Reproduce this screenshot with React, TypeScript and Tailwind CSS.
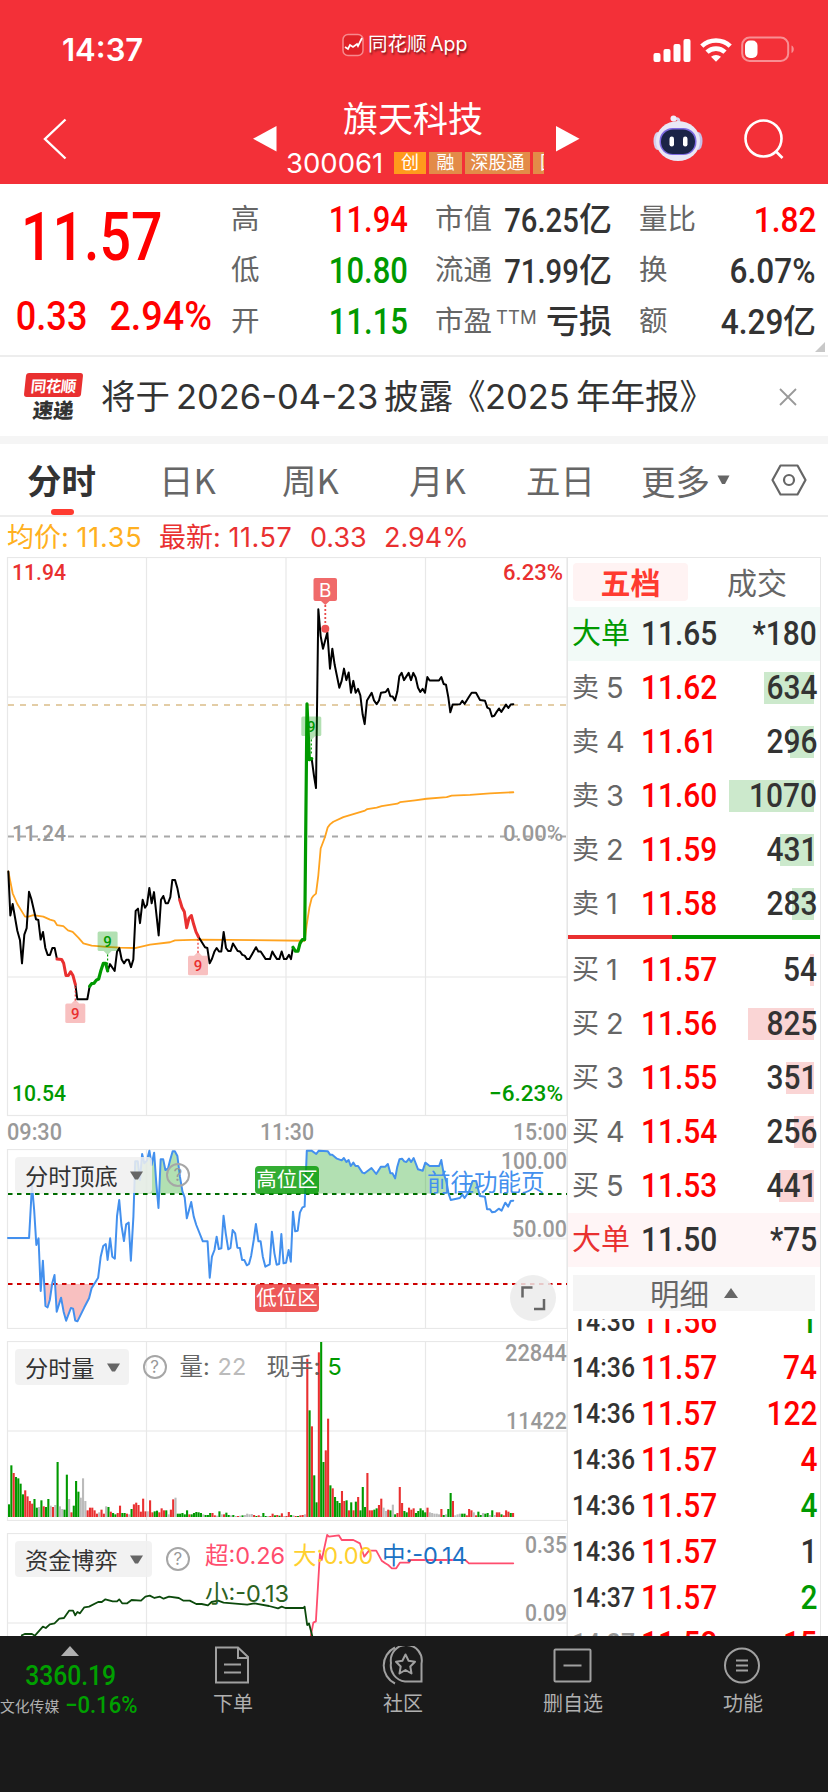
import { clsx } from 'clsx';

const DIN = "font-['Roboto','Noto_Sans_CJK_SC',sans-serif] font-medium";

const quoteColumns = [
  [
    { label: '高', value: '11.94', color: 'text-[#ff0000]' },
    { label: '低', value: '10.80', color: 'text-[#009900]' },
    { label: '开', value: '11.15', color: 'text-[#009900]' },
  ],
  [
    { label: '市值', value: '76.25', unit: '亿', color: 'text-[#333333]' },
    { label: '流通', value: '71.99', unit: '亿', color: 'text-[#333333]' },
    { label: '市盈', sup: 'TTM', value: '', unit: '亏损', color: 'text-[#333333]' },
  ],
  [
    { label: '量比', value: '1.82', color: 'text-[#ff0000]' },
    { label: '换', value: '6.07%', color: 'text-[#333333]' },
    { label: '额', value: '4.29', unit: '亿', color: 'text-[#333333]' },
  ],
];

const valueSizes = ['scale-x-[0.86] text-[36px]', 'scale-x-[0.86] text-[34px]', 'scale-x-[0.89] text-[35.500px]'];

const asks = [
  { label: '卖', level: 5, price: '11.62', qty: '634', bar: 50 },
  { label: '卖', level: 4, price: '11.61', qty: '296', bar: 24 },
  { label: '卖', level: 3, price: '11.60', qty: '1070', bar: 85 },
  { label: '卖', level: 2, price: '11.59', qty: '431', bar: 34 },
  { label: '卖', level: 1, price: '11.58', qty: '283', bar: 22 },
];

const bids = [
  { label: '买', level: 1, price: '11.57', qty: '54', bar: 4 },
  { label: '买', level: 2, price: '11.56', qty: '825', bar: 66 },
  { label: '买', level: 3, price: '11.55', qty: '351', bar: 28 },
  { label: '买', level: 4, price: '11.54', qty: '256', bar: 20 },
  { label: '买', level: 5, price: '11.53', qty: '441', bar: 35 },
];

const trades = [
  { time: '14:36', price: '11.56', qty: '1', color: 'text-[#009900]' },
  { time: '14:36', price: '11.57', qty: '74', color: 'text-[#ff0000]' },
  { time: '14:36', price: '11.57', qty: '122', color: 'text-[#ff0000]' },
  { time: '14:36', price: '11.57', qty: '4', color: 'text-[#ff0000]' },
  { time: '14:36', price: '11.57', qty: '4', color: 'text-[#009900]' },
  { time: '14:36', price: '11.57', qty: '1', color: 'text-[#333333]' },
  { time: '14:37', price: '11.57', qty: '2', color: 'text-[#009900]' },
  { time: '14:37', price: '11.58', qty: '15', color: 'text-[#ff0000]' },
];

const PRICE_BLACK = [
  '25,840 31,955 38,925 52,995 60,1020 66,1080 73,1005 80,988 87,893 94,912 108,965 115,967 122,1018 129,998 136,1040 143,1058 150,1058 157,1040 164,1040 171,1069',
  '226,1135 232,1174 262,1174 269,1140',
  '323,1100 330,1082 344,1100 351,1050 358,1040 365,1070 372,1080 379,1071 386,1071 393,1090 400,1070 407,943 414,937 420,975 428,914 435,935 441,927 448,883 455,923 462,894 469,950 476,1007 483,914 490,904 497,923 504,923 511,907 517,862 525,862 532,883 539,914',
  '595,1010 615,1038 622,1040 629,1080 636,1068 643,1050 650,1040 657,1049 664,1049 671,998 678,1040 685,1048 692,1048 699,1028 706,1038 713,1048 720,1049 727,1058 734,1060 741,1069 748,1069 755,1058 768,1038 775,1049 782,1049 797,1069 810,1069 817,1049 824,1060 831,1069 838,1069 845,1049 852,1069 859,1069 867,1058 873,1069 879,1038',
  '935,545 942,590 948,622 955,155 962,225 969,258 982,215 990,310 997,258 1004,300 1011,330 1018,360 1025,342 1032,310 1039,340 1046,320 1053,373 1060,342 1067,373 1074,363 1081,380 1088,430 1094,455 1101,393 1115,373 1122,393 1130,403 1137,393 1143,373 1157,371 1164,363 1171,382 1178,383 1185,393 1192,370 1198,330 1205,321 1212,340 1226,321 1233,340 1240,321 1247,333 1254,360 1261,371 1268,363 1275,373 1282,332 1289,341 1317,341 1324,332 1331,350 1338,352 1345,385 1351,424 1358,404 1380,403 1387,394 1394,402 1408,382 1415,373 1428,373 1440,392 1455,394 1462,412 1469,415 1476,435 1483,433 1490,423 1497,414 1504,423 1518,404 1525,413 1532,404 1540,403',
];
const PRICE_RED = [
  '171,1069 185,1070 191,1080 198,1112 205,1112 212,1102 219,1112 226,1135',
  '539,914 546,934 553,945 560,987 567,962 574,955 581,978 588,998 595,1010',
];
const PRICE_GREEN = [
  '269,1140 275,1133 282,1132 289,1124 296,1121 303,1098 310,1080 317,1080 323,1100',
  '879,1038 886,1048 894,1048 900,1028 907,1018 914,1018 921,402 928,548 935,545',
];
const AVERAGE =
  '25,840 38,897 52,925 66,945 75,958 85,958 100,954 130,958 150,966 163,969 171,980 190,983 204,994 218,998 235,1013 250,1028 275,1034 320,1037 360,1039 405,1040 450,1031 510,1025 525,1020 600,1018 914,1021 920,980 928,935 935,910 941,903 948,898 955,850 962,780 975,750 983,725 990,717 1000,710 1030,698 1065,689 1095,681 1102,677 1130,673 1145,669 1192,663 1200,659 1245,654 1280,650 1340,646 1355,642 1410,640 1470,636 1540,633';

const TOP_BOTTOM =
  '22,384 80,384 88,225 94,300 100,405 106,385 112,543 118,452 125,588 131,592 137,570 144,518 150,495 156,605 168,563 175,605 182,632 195,594 201,596 207,632 213,634 232,592 245,565 252,535 270,503 277,440 284,408 291,402 296,450 303,385 309,440 316,446 322,318 328,270 334,345 341,393 347,343 354,338 360,452 367,320 372,154 379,154 385,210 391,132 397,160 404,152 411,122 417,165 424,128 430,220 436,294 442,148 449,148 455,180 462,176 468,150 475,124 481,124 488,138 495,200 502,245 508,262 514,325 526,276 533,320 540,345 558,394 571,394 577,503 583,440 590,420 596,380 602,417 609,415 615,317 621,370 628,418 634,414 640,360 647,370 653,413 660,414 666,450 672,450 679,466 685,462 691,437 698,390 704,342 711,394 717,394 723,440 730,470 742,463 748,365 755,430 761,464 768,462 774,372 780,460 787,458 794,420 800,455 806,305 812,364 819,362 825,308 832,292 838,290 844,122 857,122 870,132 877,122 902,124 908,134 914,134 927,146 940,151 946,144 953,156 959,150 965,168 972,158 978,168 985,168 997,188 1003,190 1022,174 1035,192 1048,170 1060,170 1067,162 1074,190 1080,190 1087,205 1093,170 1099,148 1106,146 1112,154 1118,156 1125,146 1131,156 1138,144 1150,178 1163,182 1170,158 1182,168 1208,168 1214,150 1220,188 1228,215 1234,250 1240,270 1265,264 1272,254 1278,264 1290,245 1300,213 1310,213 1320,258 1334,260 1340,298 1348,298 1354,307 1362,305 1372,296 1380,302 1390,278 1398,290 1405,273 1412,272';

// one entry per minute: colour (g/r/x) and height
const VOLUME =
  'g38 g155 r132 g120 g116 g100 g68 r80 r62 r48 r40 g54 g28 x30 g50 r32 g30 g54 x34 r30 x36 g165 x32 x24 g22 g127 x54 r14 g34 g108 g76 x58 x116 x48 r20 r28 r28 r20 r10 x14 r22 r10 x32 g30 r16 g12 g8 r12 r34 g12 g12 r10 x8 g24 r38 r43 r36 r16 r55 r17 x17 r50 r14 g17 g19 r14 r26 r20 g20 x8 r22 r53 x58 g10 g10 g12 g8 g20 r8 g8 g12 g15 g14 g12 x8 g6 g6 g12 r12 r5 x4 g17 x8 r8 g13 g6 x5 g6 x3 r3 x4 g5 x6 x10 x8 x9 r6 g3 r5 x3 g12 g3 x3 r3 r10 g5 r6 g4 r11 x3 r3 r15 g6 x5 r3 g3 r5 r6 x8 r475 g320 r272 g125 g44 r494 g525 g165 r200 r295 g95 r86 g60 g48 g42 r78 r48 g50 r20 g44 r20 g46 r60 g20 g90 g30 r132 r20 r20 g22 g26 r36 r55 x28 x18 r22 g20 x37 g8 r12 r90 r42 g18 g14 r28 r22 r26 g12 g18 g26 g20 g14 r28 x14 x12 x10 x10 x8 r24 g6 x8 g24 g72 r48 x5 x8 x10 g10 g10 r5 r24 r20 x14 r5 g16 g6 x12 g10 g12 x6 g20 x6 r14 r14 g8 r5 r20 r16 g12 r12';

const FUND_GREEN =
  '60,916 68,912 88,912 96,917 118,890 126,894 137,883 150,880 163,866 176,864 190,842 201,842 207,856 213,846 220,850 232,832 245,830 270,816 280,816 290,808 310,814 322,814 328,808 336,820 350,820 362,810 388,812 400,800 412,797 425,804 440,800 450,806 465,800 492,804 505,812 522,812 540,822 555,822 572,826 582,816 600,812 615,818 680,824 700,820 740,828 765,835 775,830 785,834 835,834 838,830 845,885 850,880 859,918';
const FUND_RED =
  '855,918 862,878 869,874 880,672 885,690 900,615 905,620 932,616 940,630 972,630 990,640 1002,680 1015,662 1035,662 1050,692 1060,700 1068,705 1078,715 1090,715 1100,698 1125,698 1130,690 1280,690 1290,700 1412,700';

const barColors: Record<string, string> = { g: '#009900', r: '#e93030', x: '#bbbbbb' };

function Line({ points, color, width = 1.8 }: { points: string; color: string; width?: number }) {
  return (
    <polyline
      points={points}
      fill="none"
      stroke={color}
      strokeWidth={width}
      strokeLinejoin="round"
      strokeLinecap="round"
      vectorEffect="non-scaling-stroke"
    />
  );
}

type LabelProps = { x: number; y: number; w: number; size: number; color: string; children: string; end?: boolean; weight?: number };

function AxisLabel({ x, y, w, size, color, children, end, weight = 500 }: LabelProps) {
  return (
    <text
      x={x}
      y={y}
      fontSize={size}
      fill={color}
      fontFamily="Roboto, 'Noto Sans CJK SC', sans-serif"
      fontWeight={weight}
      textAnchor={end ? 'end' : 'start'}
      textLength={w}
      lengthAdjust="spacingAndGlyphs"
    >
      {children}
    </text>
  );
}

function Flag({ x, y, up, color, bg }: { x: number; y: number; up?: boolean; color: string; bg: string }) {
  return (
    <g>
      <rect x={x - 10} y={y} width="20" height="19.5" rx="1.5" fill={bg} />
      <path d={up ? `M${x - 4} ${y}l4 -4l4 4z` : `M${x - 4} ${y + 19.5}l4 4l4 -4z`} fill={bg} />
      <path d={up ? `M${x} ${y - 3}V${y - 20}` : `M${x} ${y + 23}V${y + 39}`} stroke={color} strokeWidth="1.2" strokeDasharray="2 2" />
      <text x={x} y={y + 15.5} fontSize="15" fontFamily="Roboto, sans-serif" fontWeight="500" textAnchor="middle" fill={color}>
        9
      </text>
    </g>
  );
}

function StatusBar() {
  return (
    <div className="flex h-[92px] items-start pr-[33px] pl-[62px] text-white">
      <div className="w-[280px] shrink-0 pt-[31px] text-[31px] leading-[38px] font-semibold">14:37</div>
      <div className="flex items-center gap-[4px] pt-[31px] whitespace-nowrap">
        <svg width="22" height="24" viewBox="0 0 22 24">
          <rect x="1" y="1.5" width="20" height="21" rx="5" fill="#e02228" stroke="#f7898d" strokeWidth="1.5" />
          <path d="M3 14l3 2l2 -4l3 2l4 -3l1 2l4 -8" fill="none" stroke="#fff" strokeWidth="1.7" />
        </svg>
        <span className="text-[19.500px] leading-[27px] [text-shadow:1px_2px_2px_rgba(0,0,0,0.5)]">
          同花顺 <span className="-ml-[2px]">App</span>
        </span>
      </div>
      <div className="ml-auto flex shrink-0 items-center gap-[9px] pt-[36px]">
        <svg width="38" height="25" viewBox="0 0 38 25" fill="#fff">
          <rect x="0.5" y="16" width="7" height="9" rx="2" />
          <rect x="10.5" y="12" width="7" height="13" rx="2" />
          <rect x="20.5" y="7" width="7" height="18" rx="2" />
          <rect x="30.5" y="2" width="7" height="23" rx="2" />
        </svg>
        <svg width="32" height="25" viewBox="0 0 32 25" fill="none" stroke="#fff" strokeWidth="4.6">
          <path d="M1.8 9.2a20.5 20.5 0 0 1 28.4 0" />
          <path d="M7 15.2a13 13 0 0 1 18 0" />
          <path d="M11 19.8a7.6 7.6 0 0 1 10 0l-5 5z" fill="#fff" stroke="none" />
        </svg>
        <svg width="54" height="27" viewBox="0 0 54 27">
          <rect x="1.2" y="1.5" width="46" height="23.5" rx="7.5" fill="none" stroke="#f88f93" strokeWidth="2" />
          <path d="M50.5 9.5c3 1 3 6.5 0 7.5z" fill="#f88f93" />
          <rect x="4" y="4.5" width="12.5" height="17.5" rx="5" fill="#fff" />
        </svg>
      </div>
    </div>
  );
}

function Robot() {
  return (
    <svg width="50" height="46" viewBox="0 0 50 46">
      <path d="M25 8c2 -3 0 -5 -3 -4" fill="none" stroke="#d9d6ee" strokeWidth="3" strokeLinecap="round" />
      <circle cx="20.5" cy="3.5" r="3" fill="#f0eefc" />
      <ellipse cx="4.5" cy="26" rx="4" ry="9" fill="#d5d0ee" />
      <ellipse cx="45.5" cy="26" rx="4" ry="9" fill="#c5bfe8" />
      <ellipse cx="25" cy="26" rx="22" ry="20" fill="#e9e7f6" />
      <rect x="6.5" y="13" width="37" height="27" rx="13" fill="#7d6ae0" />
      <rect x="8" y="14.5" width="34" height="24.5" rx="12" fill="#1b2447" />
      <rect x="16.5" y="21.5" width="4.5" height="10" rx="2.2" fill="#fff" />
      <rect x="30" y="21.5" width="4.5" height="10" rx="2.2" fill="#fff" />
    </svg>
  );
}

function Header() {
  return (
    <header className="h-[184px] bg-[#f33038] text-white">
      <StatusBar />
      <div className="flex h-[92px]">
        <div className="w-[253px] pt-[26px] pl-[42px]">
          <svg width="26" height="42" viewBox="0 0 26 42" fill="none" stroke="#fff" strokeWidth="2.4">
            <path d="M23.5 1.5L3 21L23.5 40.5" />
          </svg>
        </div>
        <div className="w-[33px] pt-[34px]">
          <svg width="24" height="26" viewBox="0 0 24 26" fill="#fff">
            <path d="M23.5 0V25.5L0 12.7z" />
          </svg>
        </div>
        <div className="flex w-[258px] flex-col">
          <div className="pt-px pr-[5px] pl-px text-center font-['Noto_Sans_CJK_SC',sans-serif] text-[35px] leading-[48px]">旗天科技</div>
          <div className="mt-[4px] flex h-[35px] items-center overflow-hidden">
            <span className="w-[108px] text-[27.500px] leading-[34px]">300061</span>
            <div className="flex gap-[3px] text-[18px] leading-[22px]">
              <span className="w-[32px] bg-[#ff9a1c] text-center">创</span>
              <span className="w-[33px] bg-[#e38b48] text-center">融</span>
              <span className="w-[65px] bg-[#e38b48] text-center whitespace-nowrap">深股通</span>
              <span className="w-[11px] overflow-hidden bg-[#e38b48] pl-[7px]">国</span>
            </div>
          </div>
        </div>
        <div className="w-[109px] pt-[34px] pl-[12px]">
          <svg width="24" height="26" viewBox="0 0 24 26" fill="#fff">
            <path d="M0 0V25.5L23.5 12.7z" />
          </svg>
        </div>
        <div className="w-[90px] pt-[23px]">
          <Robot />
        </div>
        <div className="pt-[26px]">
          <svg width="42" height="42" viewBox="0 0 42 42" fill="none" stroke="#fff" strokeWidth="2.6">
            <circle cx="20.5" cy="20.5" r="18" />
            <path d="M33 33.5L39.5 40" />
          </svg>
        </div>
      </div>
    </header>
  );
}

function Quote() {
  return (
    <section className="flex h-[173px] border-b-2 border-[#ededed] pt-[10px]">
      <div className={clsx(DIN, 'w-[231px] text-[#ff0000]')}>
        <div className="h-[91px] w-fit origin-left scale-x-[0.84] pt-[5px] pl-[25px] text-[66px] leading-[78px]">11.57</div>
        <div className="flex pt-[6px] text-[41px] leading-[50px]">
          <span className="w-[91px] origin-left scale-x-[0.88] pl-[18px]">0.33</span>
          <span className="origin-left scale-x-[0.92] pl-[20px]">2.94%</span>
        </div>
      </div>
      <div className="flex gap-[27px]">
        {quoteColumns.map((rows, i) => (
          <div key={i} className="w-[177px]">
            {rows.map((r) => (
              <div key={r.label} className="flex h-[51px] items-center justify-between whitespace-nowrap">
                <span className="flex text-[28.500px] text-[#666666]">
                  {r.label}
                  {'sup' in r && r.sup && <span className="pt-[2px] pl-[4px] text-[18.500px] leading-[30px]">{r.sup}</span>}
                </span>
                <span className={clsx(DIN, 'flex items-center', r.color)}>
                  <span className={clsx('origin-right leading-[50px]', valueSizes[i])}>{r.value}</span>
                  {'unit' in r && <span className="text-[33px] leading-[50px]">{r.unit}</span>}
                </span>
              </div>
            ))}
          </div>
        ))}
      </div>
      <svg className="mt-[148px] -ml-px" width="10" height="10" viewBox="0 0 10 10">
        <path d="M10 0V10H0z" fill="#c8c8c8" />
      </svg>
    </section>
  );
}

function Notice() {
  return (
    <section className="flex h-[87px] items-center border-b-8 border-[#f5f5f5] pl-[25px] text-[#333333]">
      <div className="flex w-[76px] flex-col font-['Noto_Sans_CJK_SC',sans-serif]">
        <div className="h-[24px] w-[57px] -skew-x-6 rounded-[3px] bg-[#e93030] text-center text-[15.500px] leading-[24px] font-bold tracking-[-0.500px] text-white">同花顺</div>
        <div className="h-[24px] w-[57px] -skew-x-6 text-center text-[20.500px] leading-[24px] font-black">速递</div>
      </div>
      <div className="flex w-[677px] items-center text-[34.500px] leading-[50px] whitespace-nowrap">
        <span className="w-[75px] shrink-0">将于</span>
        <span className="w-[208px] shrink-0">2026-04-23</span>
        <span className="w-[67px] shrink-0">披露</span>
        <span className="w-[34px] shrink-0">《</span>
        <span className="w-[91px] shrink-0">2025</span>
        <span>年年报》</span>
      </div>
      <svg width="20" height="20" viewBox="0 0 20 20" stroke="#999" strokeWidth="1.8">
        <path d="M2 2L18 18M18 2L2 18" />
      </svg>
    </section>
  );
}

function PeriodTabs() {
  return (
    <nav className="flex h-[73px] border-b-2 border-[#ededed] font-['Noto_Sans_CJK_SC',sans-serif] text-[34.500px] leading-[70px] text-[#666666]">
      <div className="relative w-[159px] pl-[27px] font-bold text-[#333333]">
        分时
        <div className="absolute bottom-0 left-[51px] h-[6px] w-[23px] rounded-full bg-[#ff3b30]" />
      </div>
      <div className="w-[123px]">日K</div>
      <div className="w-[127px]">周K</div>
      <div className="w-[117px]">月K</div>
      <div className="w-[115px]">五日</div>
      <div className="flex w-[130px] items-center">
        更多
        <svg className="ml-[7px]" width="13" height="10" viewBox="0 0 13 10" fill="#666">
          <path d="M0.5 0.5H12.5L8 9H5z" />
        </svg>
      </div>
      <svg className="mt-[19px]" width="36" height="34" viewBox="0 0 36 34" fill="none" stroke="#666" strokeWidth="2.2">
        <path d="M9.5 2.5H26.5L34.5 17L26.5 31.5H9.5L1.5 17z" strokeLinejoin="round" />
        <circle cx="18" cy="17" r="5" />
      </svg>
    </nav>
  );
}

function Grid({ top, height, rows }: { top: number; height: number; rows: number[] }) {
  return (
    <g stroke="#e8e8e8">
      {rows.map((y) => (
        <path key={y} d={`M8 ${y}H567`} stroke="#f2f2f2" strokeWidth="2" />
      ))}
      <path d={`M146.5 ${top}v${height}M286 ${top}v${height}M425.5 ${top}v${height}`} strokeWidth="1.2" />
      <rect x="7.5" y={top + 0.5} width="559.5" height={height - 1} fill="none" strokeWidth="1.2" />
    </g>
  );
}

function PriceChart() {
  return (
    <svg className="block" width="568" height="592" viewBox="0 557 568 592">
      <Grid top={557} height={559} rows={[697, 977]} />
      <path d="M8 705H567" stroke="#e3cda6" strokeWidth="2" strokeDasharray="6 6" />
      <path d="M8 836.5H567" stroke="#a8a8a8" strokeWidth="2" strokeDasharray="6 6" />
      <g transform="translate(0 550) scale(0.33333 0.38270)">
        <Line points={AVERAGE} color="#ffa31f" />
        {PRICE_BLACK.map((p) => <Line key={p} points={p} color="#000" width={2} />)}
        {PRICE_RED.map((p) => <Line key={p} points={p} color="#e93030" width={3} />)}
        {PRICE_GREEN.map((p) => <Line key={p} points={p} color="#009900" width={3.2} />)}
      </g>
      <Flag x={75.3} y={1003.5} up color="#e93030" bg="rgba(233,48,48,0.3)" />
      <Flag x={107.6} y={931.5} color="#009900" bg="rgba(0,153,0,0.3)" />
      <Flag x={198} y={955.8} up color="#e93030" bg="rgba(233,48,48,0.3)" />
      <Flag x={311.3} y={716.5} color="#009900" bg="rgba(0,153,0,0.3)" />
      <rect x="313.5" y="578" width="23.5" height="23" rx="2" fill="#f06a6a" />
      <path d="M321 601l4.3 4l4.3 -4z" fill="#f06a6a" />
      <path d="M325.3 605V625" stroke="#e94a4a" strokeWidth="1.8" strokeDasharray="2 2" />
      <circle cx="325.3" cy="628.7" r="4" fill="#ee5252" />
      <text x="325.3" y="597" fontSize="19" fontFamily="Inter, sans-serif" textAnchor="middle" fill="#fff">B</text>
      <AxisLabel x={12} y={579.5} w={54} size={22.5} color="#e93030">11.94</AxisLabel>
      <AxisLabel x={563} y={579.5} w={60} size={22.5} color="#e93030" end>6.23%</AxisLabel>
      <AxisLabel x={12} y={840.5} w={54} size={22.5} color="#999">11.24</AxisLabel>
      <AxisLabel x={563} y={840.5} w={60} size={22.5} color="#999" end>0.00%</AxisLabel>
      <AxisLabel x={12} y={1101} w={54} size={22.5} color="#009900">10.54</AxisLabel>
      <AxisLabel x={563} y={1101} w={74} size={22.5} color="#009900" end>−6.23%</AxisLabel>
      <AxisLabel x={7} y={1140} w={55} size={23.5} color="#999">09:30</AxisLabel>
      <AxisLabel x={260} y={1140} w={54} size={23.5} color="#999">11:30</AxisLabel>
      <AxisLabel x={567} y={1140} w={54} size={23.5} color="#999" end>15:00</AxisLabel>
    </svg>
  );
}

function IndicatorPicker({ label }: { label: string }) {
  return (
    <div className="flex items-center gap-[14px]">
      <div className="flex h-[36px] items-center gap-[12px] rounded-[4px] bg-[#f0f0f0]/85 pr-[9px] pl-[10px] font-['Noto_Sans_CJK_SC',sans-serif] text-[23.200px] leading-[36px] text-[#333333]">
        {label}
        <svg width="13" height="9" viewBox="0 0 13 9" fill="#666">
          <path d="M0 0.5H13L8 8.5H5z" />
        </svg>
      </div>
      <div className="flex h-[24px] w-[24px] items-center justify-center rounded-full border-2 border-[#a6a6a6] text-[17px] leading-none text-[#999999]">?</div>
    </div>
  );
}

function TopBottomChart() {
  return (
    <div className="relative h-[192px]">
      <svg className="block" width="568" height="180" viewBox="0 1149 568 180">
        <defs>
          <clipPath id="high">
            <rect x="0" y="100" width="1600" height="151" />
          </clipPath>
          <clipPath id="low">
            <rect x="0" y="521" width="1600" height="140" />
          </clipPath>
        </defs>
        <Grid top={1149} height={180} rows={[1238.5]} />
        <path d="M8 1194H567" stroke="#006a00" strokeWidth="2" strokeDasharray="4.5 4.5" />
        <path d="M8 1284H567" stroke="#cc0000" strokeWidth="2" strokeDasharray="4.5 4.5" />
        <g transform="translate(0 1110) scale(0.36350 0.33333)">
          <polygon points={`22,251 ${TOP_BOTTOM} 1412,251`} fill="rgba(0,153,0,0.3)" clipPath="url(#high)" />
          <polygon points={`22,521 ${TOP_BOTTOM} 1412,521`} fill="rgba(233,48,48,0.3)" clipPath="url(#low)" />
          <Line points={TOP_BOTTOM} color="#4390ee" width={2} />
        </g>
        <AxisLabel x={567} y={1168.5} w={66} size={23.5} color="#999" end>100.00</AxisLabel>
        <AxisLabel x={567} y={1236.5} w={55} size={23.5} color="#999" end>50.00</AxisLabel>
      </svg>
      <div className="absolute top-[8px] left-[15px]">
        <IndicatorPicker label="分时顶底" />
      </div>
      <div className="absolute top-[17px] left-[255px] h-[28px] w-[64px] rounded-[4px] bg-[#009900]/80 text-center text-[20.500px] leading-[28px] text-white">高位区</div>
      <div className="absolute top-[135px] left-[255px] h-[28px] w-[64px] rounded-[4px] bg-[#e93030]/80 text-center text-[20.500px] leading-[28px] text-white">低位区</div>
      <div className="absolute top-[14px] left-[427px] font-['Noto_Sans_CJK_SC',sans-serif] text-[23.500px] leading-[36px] text-[#4390ee]">前往功能页</div>
      <svg className="absolute top-[126px] left-[510px]" width="46" height="46" viewBox="0 0 46 46">
        <circle cx="23" cy="23" r="23" fill="rgba(235,235,235,0.85)" />
        <path d="M12.5 22.5V12.5H22.5M34 24V34H24" fill="none" stroke="#666" strokeWidth="2.5" />
      </svg>
    </div>
  );
}

function VolumeChart() {
  return (
    <div className="relative h-[192px]">
      <svg className="block" width="568" height="180" viewBox="0 1341 568 180">
        <Grid top={1341} height={180} rows={[1431]} />
        {VOLUME.split(' ').map((v, i) => {
          const h = Number(v.slice(1)) / 3;
          return <rect key={i} x={8 + i * 2.312} y={1517 - h} width="2.1" height={h} fill={barColors[v[0]]} />;
        })}
        <AxisLabel x={567} y={1361} w={62} size={23.5} color="#999" end>22844</AxisLabel>
        <AxisLabel x={567} y={1428.5} w={61} size={23.5} color="#999" end>11422</AxisLabel>
      </svg>
      <div className="absolute top-[8px] left-[15px] flex items-center text-[23.500px] leading-[36px] whitespace-nowrap text-[#666666]">
        <IndicatorPicker label="分时量" />
        <span className="w-[38px] pl-[13px]">量:</span>
        <span className="w-[62px] pl-[13px] text-[#bbbbbb]">22</span>
        <span className="w-[61px]">现手:</span>
        <span className="text-[#009900]">5</span>
      </div>
    </div>
  );
}

function FundChart() {
  return (
    <div className="relative h-[103px] overflow-hidden">
      <svg className="block" width="568" height="103" viewBox="0 1533 568 103">
        <Grid top={1533} height={180} rows={[1623]} />
        <g transform="translate(0 1330) scale(0.36350 0.33333)">
          <Line points={FUND_RED} color="#ff4d6e" />
          <Line points={FUND_GREEN} color="#0c4a0c" />
        </g>
        <AxisLabel x={567} y={1553} w={42} size={23.5} color="#999" end>0.35</AxisLabel>
        <AxisLabel x={567} y={1620.5} w={42} size={23.5} color="#999" end>0.09</AxisLabel>
      </svg>
      <div className="absolute top-[8px] left-[15px]">
        <IndicatorPicker label="资金博弈" />
      </div>
      <div className="absolute top-[4px] left-[205px] text-[23.500px] leading-[38px] whitespace-nowrap">
        <div className="flex">
          <span className="w-[88px] text-[#ff4d6e]">超:0.26</span>
          <span className="w-[89px] text-[#ffd02e]">大:0.00</span>
          <span className="text-[#1a72c4]">中:-0.14</span>
        </div>
        <div className="text-[#2c6222]">小:-0.13</div>
      </div>
    </div>
  );
}

function BigOrder({ price, qty, sell }: { price: string; qty: string; sell?: boolean }) {
  return (
    <div className={clsx('flex h-[54px] items-center pr-[3px] pl-[4px]', sell ? 'bg-[#f2faf7]' : 'bg-[#fff5f6]')}>
      <span className={clsx('w-[69px] text-[29px]', sell ? 'text-[#009900]' : 'text-[#e93030]')}>大单</span>
      <span className={clsx(DIN, 'origin-left scale-x-[0.92] text-[32.500px] text-[#333333]')}>{price}</span>
      <span className={clsx(DIN, 'ml-auto origin-right scale-x-[0.92] text-[32.500px] text-[#333333]')}>{qty}</span>
    </div>
  );
}

function Level({ row, bar }: { row: (typeof asks)[number]; bar: string }) {
  return (
    <div className="relative flex h-[54px] items-center pr-[3px] pl-[4px]">
      <div className={clsx('absolute top-[11px] right-[6px] h-[32px]', bar)} style={{ width: row.bar }} />
      <span className="w-[34px] text-[27px] text-[#666666]">{row.label}</span>
      <span className="w-[35px] text-[29px] text-[#666666]">{row.level}</span>
      <span className={clsx(DIN, 'origin-left scale-x-[0.92] text-[32.500px] text-[#ff0000]')}>{row.price}</span>
      <span className={clsx(DIN, 'relative ml-auto origin-right scale-x-[0.92] text-[32.500px] text-[#333333]')}>{row.qty}</span>
    </div>
  );
}

function OrderBook() {
  return (
    <aside className="h-[1079px] w-[254px] overflow-hidden border-t border-r-[1.500px] border-l-[1.500px] border-[#e6e6e6]">
      <div className="flex h-[49px] pt-[5px] pl-[5px] font-['Noto_Sans_CJK_SC',sans-serif] text-[30px] leading-[37px]">
        <div className="h-[38px] w-[115px] rounded-[4px] bg-[#fff3f3] text-center font-bold text-[#ff3b30]">五档</div>
        <div className="pl-[39px] text-[#666666]">成交</div>
      </div>
      <BigOrder sell price="11.65" qty="*180" />
      {asks.map((r) => <Level key={r.price} row={r} bar="bg-[#cce9cc]" />)}
      <div className="mt-[4px] mb-[4px] flex h-[4px]">
        <div className="w-[104px] bg-[#e93030]" />
        <div className="flex-1 bg-[#009900]" />
      </div>
      {bids.map((r) => <Level key={r.price} row={r} bar="bg-[#fad5d5]" />)}
      <BigOrder price="11.50" qty="*75" />
      <div className="mx-[5px] mt-[8px] flex h-[36px] items-center justify-center gap-[15px] bg-[#f5f5f5] font-['Noto_Sans_CJK_SC',sans-serif] text-[29.500px] leading-[36px] text-[#666666]">
        <span className="-mt-[2px]">明细</span>
        <svg width="14" height="10" viewBox="0 0 14 10" fill="#666">
          <path d="M7 0L14 10H0z" />
        </svg>
      </div>
      <div className="mt-[8px] h-[318px] overflow-hidden">
        <div className="-mt-[20px]">
          {trades.map((t, i) => (
            <div key={i} className={clsx(DIN, 'flex h-[46px] items-center pr-[3px] pl-[4px]')}>
              <span className={clsx('w-[69px] origin-left scale-x-[0.92] text-[27px]', i === 7 ? 'text-[#999999]' : 'text-[#333333]')}>{t.time}</span>
              <span className="origin-left scale-x-[0.92] text-[32.500px] text-[#ff0000]">{t.price}</span>
              <span className={clsx('ml-auto origin-right scale-x-[0.92] text-[32.500px]', t.color)}>{t.qty}</span>
            </div>
          ))}
        </div>
      </div>
    </aside>
  );
}

function BottomBar() {
  return (
    <footer className="flex h-[156px] bg-[#1a1a1a] text-[#b0b0b0]">
      <div className="flex w-[148px] flex-col">
        <svg className="mt-[10px] ml-[61px]" width="18" height="10" viewBox="0 0 18 10" fill="#b0b0b0">
          <path d="M9 0L18 10H0z" />
        </svg>
        <div className={clsx(DIN, 'mt-[2px] w-[142px] text-center text-[28px] leading-[36px] text-[#00a000]')}>
          <span className="inline-block scale-x-[0.88]">3360.19</span>
        </div>
        <div className="flex items-center leading-[24px] whitespace-nowrap">
          <span className="w-[65px] font-['Noto_Sans_CJK_SC',sans-serif] text-[14.800px]">文化传媒</span>
          <span className={clsx(DIN, 'origin-left scale-x-[0.96] text-[23px] text-[#00a000]')}>−0.16%</span>
        </div>
      </div>
      <BottomItem label="下单">
        <path d="M4 1.5H26L36 11V36.5H4zM26 1.5V12H36" />
        <path d="M12 18.5H29M12 26.5H29" />
      </BottomItem>
      <BottomItem label="社区">
        <path d="M9 17A15.5 15.5 0 1 1 39.5 17.5V35.5H23A16 16 0 0 1 9 17z" />
        <path d="M13 1.5A20 20 0 0 0 13 37.5" />
        <path d="M23.5 8.5L26.600 14.8L33 15.7L28.3 20.5L29.5 27.5L23.5 24L17.5 27.5L18.7 20.5L14 15.7L20.4 14.8z" strokeLinejoin="round" />
      </BottomItem>
      <BottomItem label="删自选">
        <rect x="2.5" y="3.5" width="36" height="32" rx="1" />
        <path d="M11.5 19.5H29.5" />
      </BottomItem>
      <BottomItem label="功能">
        <circle cx="20" cy="19.5" r="17" />
        <path d="M14 14.5H26M14 19.5H26M14 24.5H26" />
      </BottomItem>
    </footer>
  );
}

function BottomItem({ label, children }: { label: string; children: React.ReactNode }) {
  return (
    <div className="flex flex-1 flex-col items-center">
      <svg className="mt-[10px]" width="42" height="40" viewBox="0 0 42 40" fill="none" stroke="#a0a0a0" strokeWidth="2">
        {children}
      </svg>
      <span className="mt-[2px] font-['Noto_Sans_CJK_SC',sans-serif] text-[20px] leading-[30px]">{label}</span>
    </div>
  );
}

export default function App() {
  return (
    <div className="flex h-[1792px] w-[828px] flex-col overflow-hidden bg-white font-['Inter','Noto_Sans_CJK_SC',sans-serif]">
      <Header />
      <Quote />
      <Notice />
      <PeriodTabs />
      <div className="flex h-[40px] items-center pt-px pl-[7px] text-[27px] leading-[40px] text-[#e93030]">
        <span className="w-[152px] text-[#ffb020]">均价: <span className="tracking-[0.800px]">11.35</span></span>
        <span className="w-[151px]">最新: <span className="tracking-[0.600px]">11.57</span></span>
        <span className="w-[74px]">0.33</span>
        <span>2.94%</span>
      </div>
      <div className="flex h-[1079px]">
        <div className="w-[567px] shrink-0">
          <PriceChart />
          <TopBottomChart />
          <VolumeChart />
          <FundChart />
        </div>
        <OrderBook />
      </div>
      <BottomBar />
    </div>
  );
}
